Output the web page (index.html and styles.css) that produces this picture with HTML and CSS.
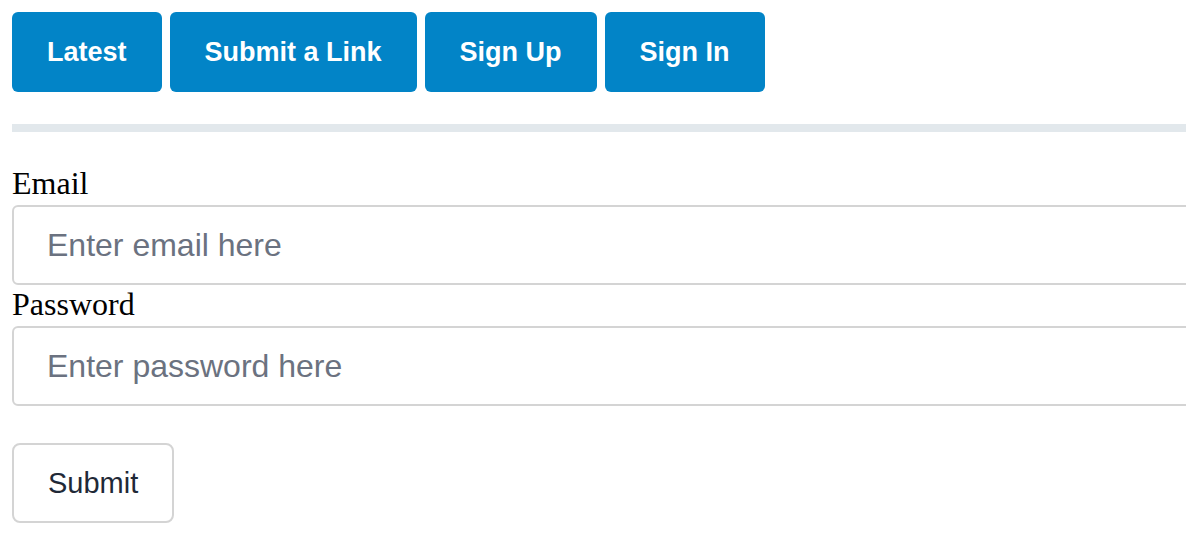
FILE: index.html
```html
<!DOCTYPE html>
<html lang="en">
<head>
<meta charset="utf-8">
<title>Sign In</title>
<link rel="stylesheet" href="styles.css">
</head>
<body>
<nav class="nav">
  <a class="nav-btn" href="#">Latest</a>
  <a class="nav-btn" href="#">Submit a Link</a>
  <a class="nav-btn" href="#">Sign Up</a>
  <a class="nav-btn" href="#">Sign In</a>
</nav>
<div class="divider"></div>
<form class="form">
  <label class="label" for="email">Email</label>
  <input class="field" id="email" type="email" placeholder="Enter email here">
  <label class="label" for="password">Password</label>
  <input class="field" id="password" type="password" placeholder="Enter password here">
  <button class="submit" type="button">Submit</button>
</form>
</body>
</html>
```
FILE: styles.css
```css
html {
  overflow: hidden;
}
body {
  margin: 12px 0 0 12px;
  overflow: hidden;
  background: #ffffff;
}
.nav {
  display: flex;
  gap: 8px;
}
.nav-btn {
  display: flex;
  align-items: center;
  height: 80px;
  padding: 0 35px;
  background: #0284c7;
  color: #ffffff;
  border-radius: 6px;
  text-decoration: none;
  font-family: "Liberation Sans", Arial, sans-serif;
  font-weight: 700;
  font-size: 27px;
}
.divider {
  margin-top: 32px;
  height: 8px;
  background: #e2e8ec;
}
.form {
  display: flex;
  flex-direction: column;
  align-items: flex-start;
  margin-top: 33px;
}
.label {
  font-family: "Liberation Serif", "Times New Roman", serif;
  font-size: 32px;
  line-height: 37px;
  color: #000;
}
.field {
  display: block;
  box-sizing: content-box;
  width: 100%;
  height: 76px;
  margin: 3px 0 1px;
  padding: 0 33px;
  border: 2px solid #d4d4d4;
  border-radius: 6px;
  font-family: "Liberation Sans", Arial, sans-serif;
  font-size: 32px;
  color: #111827;
  background: #fff;
}
.field::placeholder {
  color: #6b7280;
}
.submit {
  margin-top: 36px;
  height: 80px;
  padding: 0 34px;
  border: 2px solid #d4d4d4;
  border-radius: 8px;
  background: #fff;
  font-family: "Liberation Sans", Arial, sans-serif;
  font-size: 29px;
  color: #1f2937;
}
```
